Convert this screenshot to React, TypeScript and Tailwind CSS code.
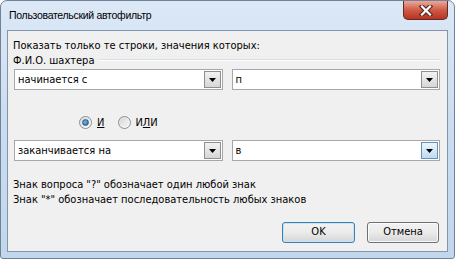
import React from "react";

const font = { fontFamily: '"DejaVu Sans Condensed", "DejaVu Sans", sans-serif' };
const titleFont = { fontFamily: '"Liberation Sans", Arial, sans-serif', letterSpacing: "-0.3px" };

function Arrow() {
  return (
    <svg width="7" height="4" viewBox="0 0 7 4">
      <path d="M0 0 H7 L3.5 4 Z" fill="#000" />
    </svg>
  );
}

function Combo({ text, focused }: { text: string; focused?: boolean }) {
  return (
    <div className="w-[209px] h-[21px] border border-[#a3a8ae] bg-white flex items-stretch">
      <div className="flex-1 pl-[3px] flex items-center text-[11px] text-black leading-none">{text}</div>
      <div
        className={
          focused
            ? "w-[17px] m-[1px] border border-[#6b8fb5] bg-gradient-to-b from-[#eaf5fd] to-[#bcdcf4] flex items-center justify-center"
            : "w-[17px] m-[1px] border border-[#8f8f8f] bg-gradient-to-b from-[#f2f2f2] to-[#d6d6d6] flex items-center justify-center"
        }
      >
        <Arrow />
      </div>
    </div>
  );
}

function Radio({ checked }: { checked?: boolean }) {
  return (
    <div className="w-[13px] h-[13px] rounded-full border border-[#8a8d91] bg-gradient-to-br from-[#dcdcdc] to-[#ffffff] flex items-center justify-center">
      {checked ? (
        <div className="w-[7px] h-[7px] rounded-full bg-[radial-gradient(circle_at_40%_40%,#7fb6e6,#1d5b9a)] border border-[#2b5f8f]" />
      ) : (
        <div className="w-[9px] h-[9px] rounded-full bg-gradient-to-br from-[#d8d8d8] to-[#f6f6f6]" />
      )}
    </div>
  );
}

export default function App() {
  return (
    <div
      className="w-[455px] h-[259px] flex flex-col border border-[#6e8299] rounded-t-[7px] rounded-b-[3px] bg-gradient-to-b from-[#dce8f6] via-[#cbdcef] to-[#c2d6ec] overflow-hidden"
      style={font}
    >
      <div className="h-[29px] flex items-start justify-between">
        <div className="pl-[8px] pt-[7px] text-[10.5px] leading-[15px] text-black" style={titleFont}>
          Пользовательский автофильтр
        </div>
        <div className="mr-[6px] w-[45px] h-[19px] rounded-b-[5px] border border-t-0 border-[#5c2c26] bg-gradient-to-b from-[#e9a99a] via-[#cf5a45] to-[#b8321f] flex items-center justify-center">
          <svg width="14" height="11" viewBox="0 0 14 11">
            <path d="M3 1.5 L11 9.5 M11 1.5 L3 9.5" stroke="#5a2a22" strokeWidth="4.5" strokeLinecap="square" />
            <path d="M3 1.5 L11 9.5 M11 1.5 L3 9.5" stroke="#ffffff" strokeWidth="2.2" strokeLinecap="square" />
          </svg>
        </div>
      </div>
      <div className="mx-[6px] h-[222px] border border-[#8195ae] bg-[#f0f0f0] pl-[5px] pr-[7px] flex flex-col text-[11px] text-black">
        <div className="mt-[7px] h-[15px] leading-[15px]">Показать только те строки, значения которых:</div>
        <div className="h-[15px] leading-[15px] flex items-center gap-[5px]">
          <span>Ф.И.О. шахтера</span>
          <div className="flex-1 h-[2px] border-t border-[#d5dfe5] border-b border-b-white mt-[-1px]" />
        </div>
        <div className="mt-[1px] ml-[1px] flex gap-[9px]">
          <Combo text="начинается с" />
          <Combo text="п" />
        </div>
        <div className="mt-[25px] h-[15px] flex items-center ml-[66px]">
          <Radio checked />
          <span className="ml-[5px] leading-[15px]">
            <span className="underline">И</span>
          </span>
          <div className="ml-[14px]">
            <Radio />
          </div>
          <span className="ml-[4px] leading-[15px]">
            И<span className="underline">Л</span>И
          </span>
        </div>
        <div className="mt-[10px] ml-[1px] flex gap-[9px]">
          <Combo text="заканчивается на" />
          <Combo text="в" focused />
        </div>
        <div className="mt-[16px] h-[15px] leading-[15px]">Знак вопроса "?" обозначает один любой знак</div>
        <div className="h-[15px] leading-[15px]">Знак "*" обозначает последовательность любых знаков</div>
        <div className="mt-[15px] flex justify-end gap-[12px] pr-[1px]">
          <div className="w-[73px] h-[21px] rounded-[3px] border border-[#3c7fb1] shadow-[inset_0_0_0_1px_#c4e5f6] bg-gradient-to-b from-[#f2f2f2] via-[#ebebeb] to-[#d5d5d5] flex items-center justify-center">
            OK
          </div>
          <div className="w-[72px] h-[21px] rounded-[3px] border border-[#707070] shadow-[inset_0_0_0_1px_#fbfbfb] bg-gradient-to-b from-[#f2f2f2] via-[#ebebeb] to-[#d5d5d5] flex items-center justify-center">
            Отмена
          </div>
        </div>
      </div>
    </div>
  );
}
